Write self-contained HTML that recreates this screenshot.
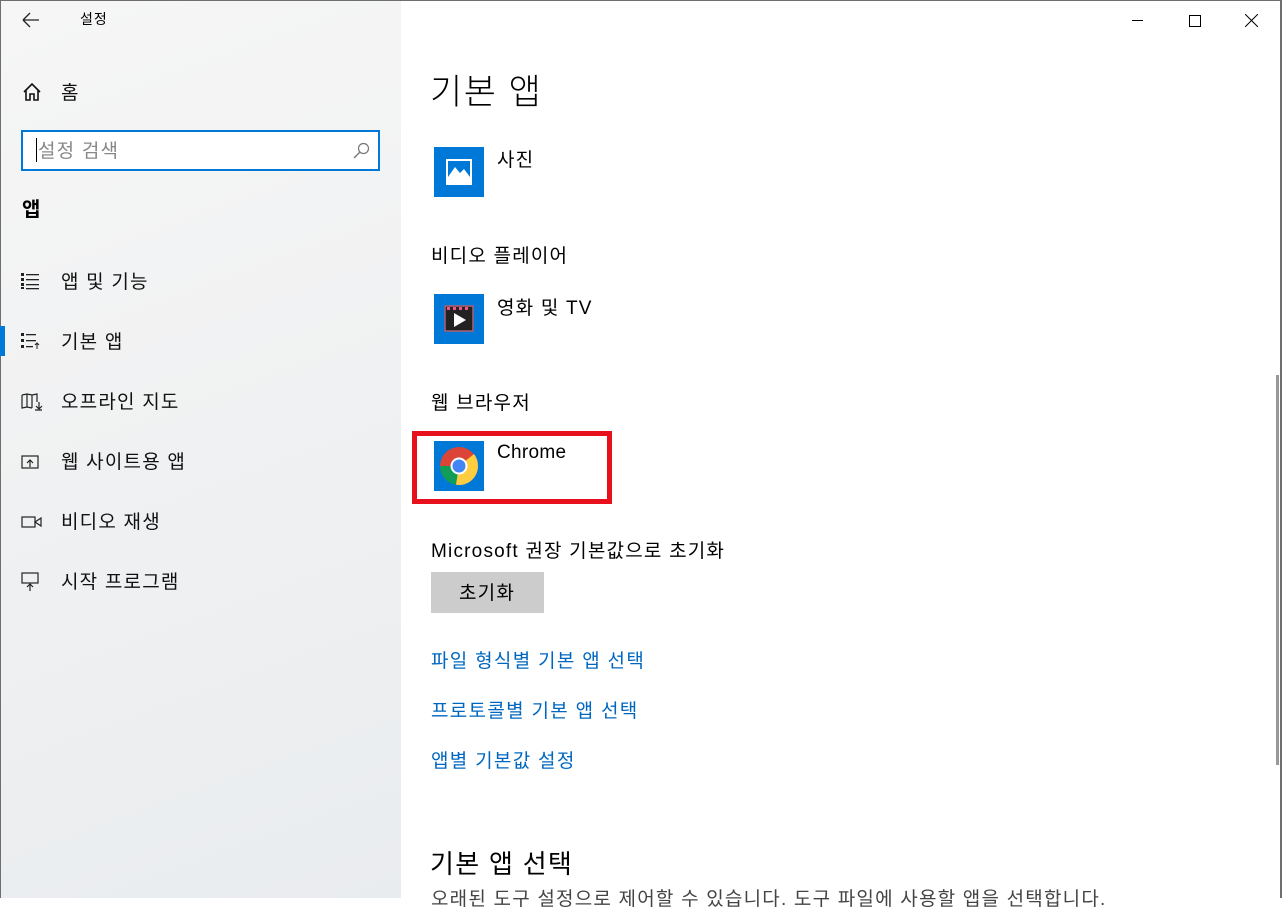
<!DOCTYPE html>
<html><head><meta charset="utf-8"><style>
*{margin:0;padding:0;box-sizing:border-box}
body{width:1282px;height:898px;overflow:hidden;font-family:"Liberation Sans","Noto Sans CJK KR",sans-serif;background:#fff;position:relative;color:#000}
.side{position:absolute;left:0;top:0;width:401px;height:898px;background:linear-gradient(160deg,#f6f6f6,#f0f1f2 50%,#e9ecef);border-left:1px solid #6e6e6e}
.abs{position:absolute;white-space:nowrap}
.nav{font-size:19px;color:#111;letter-spacing:1.2px}
.t{letter-spacing:1.2px}
.link{color:#0067c0;font-size:19px;letter-spacing:1.3px}
.tile{position:absolute;left:434px;width:50px;height:50px;background:#0078d7}
</style></head><body>
<div class="side"></div>
<div style="position:absolute;right:0;top:0;width:2px;height:898px;background:#6e6e6e"></div>
<div style="position:absolute;left:0;top:0;width:1282px;height:1px;background:#6e6e6e"></div>
<svg class="abs" style="left:22px;top:12px" width="18" height="16"><path d="M1 8H17M1 8L8 1M1 8L8 15" stroke="#222" stroke-width="1.3" fill="none"/></svg>
<div class="abs" style="left:80px;top:9px;font-size:14px;letter-spacing:1px">설정</div>
<div class="abs" style="left:1132px;top:20px;width:11px;height:1px;background:#000"></div>
<div class="abs" style="left:1189px;top:15px;width:12px;height:12px;border:1px solid #000"></div>
<svg class="abs" style="left:1245px;top:14px" width="13" height="13"><path d="M0 0L13 13M13 0L0 13" stroke="#000" stroke-width="1"/></svg>
<svg class="abs" style="left:22px;top:82px" width="20" height="20"><path d="M2 10L10 2L18 10M4 8V18H8V12H12V18H16V8" stroke="#111" stroke-width="1.6" fill="none"/></svg>
<div class="abs nav" style="left:61px;top:78px">홈</div>
<div class="abs" style="left:21px;top:130px;width:359px;height:41px;border:2px solid #0078d7;background:#fff"></div>
<div class="abs" style="left:36px;top:138px;width:1px;height:24px;background:#000"></div>
<div class="abs t" style="left:38px;top:136px;font-size:19px;color:#888">설정 검색</div>
<svg class="abs" style="left:353px;top:142px" width="17" height="17"><circle cx="10.5" cy="6.5" r="5" stroke="#777" fill="none" stroke-width="1.2"/><path d="M7 10L1 16" stroke="#777" stroke-width="1.3"/></svg>
<div class="abs" style="left:22px;top:193px;font-size:20px;font-weight:bold">앱</div>
<svg class="abs" style="left:21px;top:272px" width="20" height="18"><g fill="#222"><rect x="0" y="1" width="3" height="3"/><rect x="0" y="6" width="3" height="3"/><rect x="0" y="11" width="3" height="3"/><rect x="0" y="15" width="3" height="2"/><rect x="5" y="2" width="13" height="1.3"/><rect x="5" y="7" width="13" height="1.3"/><rect x="5" y="12" width="13" height="1.3"/><rect x="5" y="16" width="13" height="1.3"/></g></svg>
<div class="abs nav" style="left:61px;top:267px">앱 및 기능</div>
<div class="abs" style="left:0;top:326px;width:5px;height:30px;background:#0078d7"></div>
<svg class="abs" style="left:21px;top:332px" width="20" height="18"><g fill="#222"><rect x="0" y="1" width="3" height="3"/><rect x="0" y="7" width="3" height="3"/><rect x="0" y="13" width="3" height="3"/><rect x="5" y="2" width="10" height="1.3"/><rect x="5" y="8" width="10" height="1.3"/><rect x="5" y="14" width="7" height="1.3"/></g><path d="M16 17V11M14 13L16 11L18 13" stroke="#222" fill="none"/></svg>
<div class="abs nav" style="left:61px;top:327px">기본 앱</div>
<svg class="abs" style="left:21px;top:393px" width="22" height="18"><path d="M1 2L6 1L11 2L16 1V9M1 2V15L6 14L11 15M6 1V14M11 2V15M18 9V15M15 13L18 16L21 13M14 17H21" stroke="#222" fill="none" stroke-width="1.2"/></svg>
<div class="abs nav" style="left:61px;top:387px">오프라인 지도</div>
<svg class="abs" style="left:21px;top:453px" width="20" height="18"><rect x="1" y="3" width="16" height="12" stroke="#222" fill="none" stroke-width="1.2"/><path d="M9 14V7M6 10L9 7L12 10" stroke="#222" fill="none" stroke-width="1.2"/></svg>
<div class="abs nav" style="left:61px;top:447px">웹 사이트용 앱</div>
<svg class="abs" style="left:21px;top:513px" width="22" height="18"><rect x="1" y="4" width="13" height="10" stroke="#222" fill="none" stroke-width="1.2"/><path d="M14 9L20 5V13Z" stroke="#222" fill="none" stroke-width="1.2"/></svg>
<div class="abs nav" style="left:61px;top:507px">비디오 재생</div>
<svg class="abs" style="left:21px;top:572px" width="20" height="20"><rect x="1" y="1" width="16" height="10" stroke="#222" fill="none" stroke-width="1.2"/><path d="M9 19V12M6 15L9 12L12 15" stroke="#222" fill="none" stroke-width="1.2"/></svg>
<div class="abs nav" style="left:61px;top:567px">시작 프로그램</div>
<div class="abs" style="left:430px;top:64px;font-size:35px;font-weight:300;letter-spacing:1.5px">기본 앱</div>
<div class="tile" style="top:147px"><svg width="50" height="50"><rect x="12" y="12" width="26" height="26" fill="#fff"/><rect x="14" y="14" width="22" height="16" fill="#0078d7"/><path d="M14 30L21 20L26 26L30 22L36 30Z" fill="#fff"/></svg></div>
<div class="abs t" style="left:497px;top:145px;font-size:19px">사진</div>
<div class="abs t" style="left:431px;top:241px;font-size:19px">비디오 플레이어</div>
<div class="tile" style="top:294px"><svg width="50" height="50"><rect x="11" y="12" width="28" height="25" fill="#222" stroke="#b06070" stroke-width="1.5"/><g fill="#e58"><rect x="13" y="13" width="3" height="3"/><rect x="19" y="13" width="3" height="3"/><rect x="25" y="13" width="3" height="3"/><rect x="31" y="13" width="3" height="3"/></g><path d="M20 19V33L32 26Z" fill="#fff"/></svg></div>
<div class="abs t" style="left:497px;top:293px;font-size:19px">영화 및 TV</div>
<div class="abs t" style="left:431px;top:388px;font-size:19px">웹 브라우저</div>
<div class="abs" style="left:412px;top:431px;width:200px;height:73px;border:5px solid #e8101c"></div>
<div class="tile" style="top:441px"><svg width="50" height="50" viewBox="0 0 50 50"><circle cx="25" cy="25" r="19" fill="#db4437"/><path d="M6 25A19 19 0 0 0 22 43.8L25 25Z" fill="#0f9d58"/><path d="M25 25L22 43.8A19 19 0 0 0 44 25Z" fill="#ffcd40"/><path d="M25 25L44 25A19 19 0 0 0 40 13Z" fill="#ffcd40"/><circle cx="25" cy="25" r="8.5" fill="#fff"/><circle cx="25" cy="25" r="6.5" fill="#4285f4"/></svg></div>
<div class="abs" style="left:497px;top:442px;font-size:19px;letter-spacing:0.3px">Chrome</div>
<div class="abs t" style="left:431px;top:536px;font-size:19px">Microsoft 권장 기본값으로 초기화</div>
<div class="abs" style="left:431px;top:572px;width:113px;height:41px;background:#ccc"></div>
<div class="abs t" style="left:459px;top:578px;font-size:19px">초기화</div>
<div class="abs link" style="left:431px;top:646px">파일 형식별 기본 앱 선택</div>
<div class="abs link" style="left:431px;top:696px">프로토콜별 기본 앱 선택</div>
<div class="abs link" style="left:431px;top:746px">앱별 기본값 설정</div>
<div class="abs" style="left:430px;top:844px;font-size:26px;letter-spacing:1.3px">기본 앱 선택</div>
<div class="abs t" style="left:431px;top:884px;font-size:19px;color:#444">오래된 도구 설정으로 제어할 수 있습니다. 도구 파일에 사용할 앱을 선택합니다.</div>
<div class="abs" style="left:1276px;top:375px;width:3px;height:390px;background:#999"></div>
</body></html>
